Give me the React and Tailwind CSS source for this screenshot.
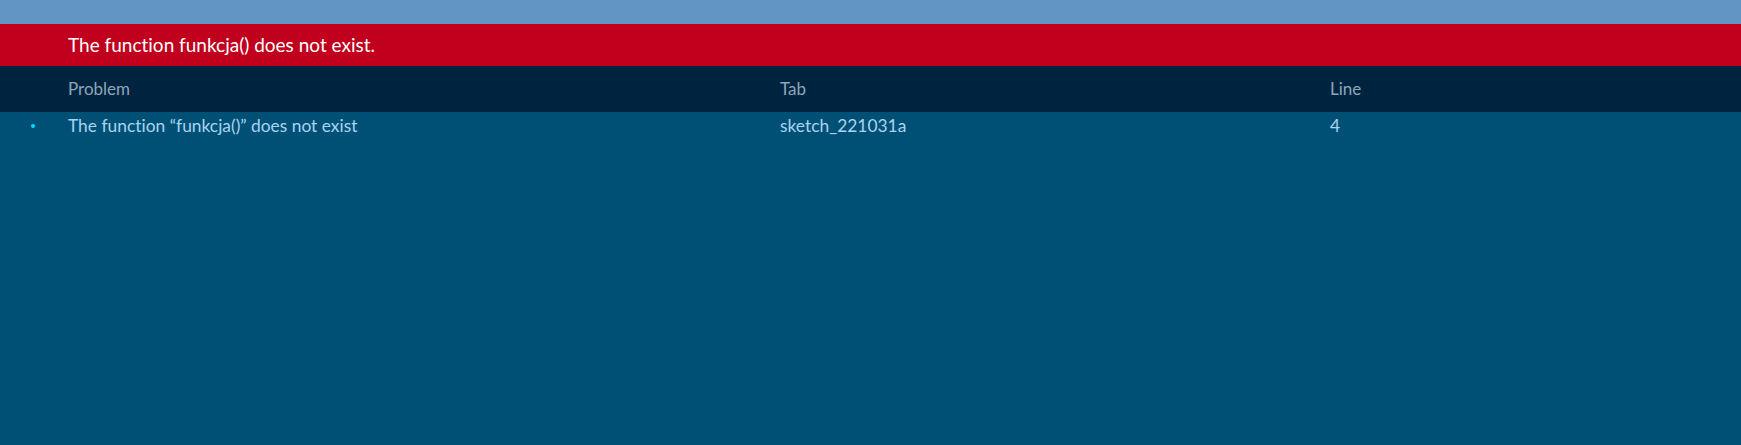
import React from "react";

const problems = [
  { text: "The function \u201cfunkcja()\u201d does not exist", tab: "sketch_221031a", line: 4 },
];

const App = () => {
  return (
    <div
      className="w-[1741px] h-[445px] flex flex-col bg-[#005075] overflow-hidden [font-variant-ligatures:none]"
      style={{ fontFamily: "Lato, 'Open Sans', sans-serif" }}
    >
      <div className="h-[24px] bg-[#6295c4]" />
      <div className="h-[42px] bg-[#c0001c] flex items-center pl-[68px]">
        <p className="text-[19px] text-white">The function funkcja() does not exist.</p>
      </div>
      <div className="h-[46px] bg-[#002440] flex items-center text-[17px] text-[#8ea6ba]">
        <div className="w-[780px] pl-[68px]">Problem</div>
        <div className="w-[550px]">Tab</div>
        <div>Line</div>
      </div>
      {problems.map((item, index) => (
        <div
          key={`problem_${index}`}
          className="h-[28px] flex items-center text-[17.4px] text-[#a8d4f2]"
        >
          <div className="w-[68px] flex items-center pl-[31px]">
            <span className="w-[4px] h-[4px] rounded-full bg-[#00d8ff]" />
          </div>
          <div className="w-[712px]">{item.text}</div>
          <div className="w-[550px]">{item.tab}</div>
          <div>{item.line}</div>
        </div>
      ))}
    </div>
  );
};

export default App;
